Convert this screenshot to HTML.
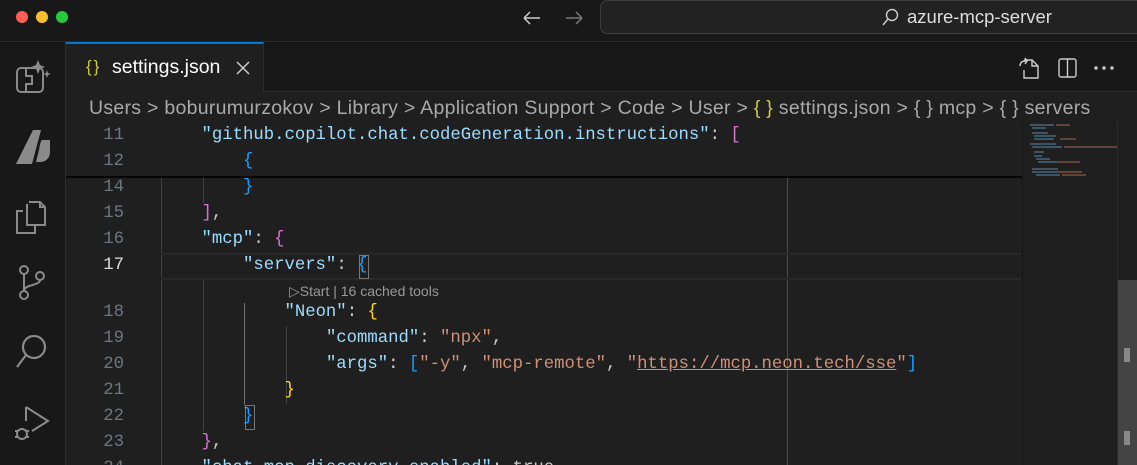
<!DOCTYPE html>
<html><head><meta charset="utf-8"><style>
*{margin:0;padding:0;box-sizing:border-box}
html,body{width:1137px;height:465px;overflow:hidden}
body{background:#1f1f1f;font-family:"Liberation Sans",sans-serif;position:relative}
.abs{position:absolute}
.mono{font-family:"Liberation Mono",monospace;font-size:17.3px;white-space:pre}
.ln{position:absolute;left:66px;width:58px;text-align:right;color:#6e7681}
.code{position:absolute;left:160px;color:#ccc}
.k{color:#9cdcfe}.s{color:#ce9178}.p{color:#da70d6}.b{color:#179fff}.y{color:#ffd700}
.g{position:absolute;width:1px;background:#404040}
</style></head><body>
<div class="abs" style="left:0;top:0;width:1137px;height:42px;background:#181818;border-bottom:1px solid #2b2b2b"></div>
<div class="abs" style="left:16px;top:11px;width:12px;height:12px;border-radius:50%;background:#ff5f57"></div>
<div class="abs" style="left:36px;top:11px;width:12px;height:12px;border-radius:50%;background:#febc2e"></div>
<div class="abs" style="left:56px;top:11px;width:12px;height:12px;border-radius:50%;background:#28c840"></div>
<svg class="abs" style="left:520px;top:8px" width="70" height="20"><path d="M4 10h16M4 10l6-6M4 10l6 6" stroke="#ccc" stroke-width="1.5" fill="none"/><path d="M46 10h16M62 10l-6-6M62 10l-6 6" stroke="#777" stroke-width="1.5" fill="none"/></svg>
<div class="abs" style="left:600px;top:0;width:560px;height:34px;border:1px solid #3c3c3c;border-radius:7px;background:#222"></div>
<svg class="abs" style="left:880px;top:7px" width="20" height="20"><circle cx="12" cy="8" r="5.5" stroke="#ccc" stroke-width="1.4" fill="none"/><path d="M8 12L3 18" stroke="#ccc" stroke-width="1.4"/></svg>
<div class="abs" style="left:907px;top:6px;color:#ddd;font-size:18.5px">azure-mcp-server</div>
<div class="abs" style="left:0;top:42px;width:66px;height:423px;background:#181818;border-right:1px solid #2b2b2b"></div>
<svg class="abs" style="left:14px;top:58px" width="40" height="40" fill="none" stroke="#8a8a8a" stroke-width="2"><rect x="3" y="10" width="26" height="24" rx="4"/><path d="M12 10v8h6v8h-6v8"/><path d="M24 2l2 5 5 2-5 2-2 5-2-5-5-2 5-2z" fill="#8a8a8a" stroke="none"/><path d="M33 12l1 3 3 1-3 1-1 3-1-3-3-1 3-1z" fill="#8a8a8a" stroke="none"/></svg>
<svg class="abs" style="left:14px;top:126px" width="40" height="40"><path d="M19 4h8l-9 34H2z" fill="#8a8a8a"/><path d="M28 14h8v12c0 6-4 10-10 10h-4l3-12c1-6 2-10 3-10z" fill="#8a8a8a"/></svg>
<svg class="abs" style="left:14px;top:195px" width="40" height="40" fill="none" stroke="#8a8a8a" stroke-width="2"><path d="M13 9V30h18V12l-5-5H15"/><path d="M26 7v5h5"/><path d="M9 16H3v22h18v-8"/></svg>
<svg class="abs" style="left:14px;top:264px" width="40" height="40" fill="none" stroke="#8a8a8a" stroke-width="2"><circle cx="10" cy="6" r="4"/><circle cx="10" cy="31" r="4"/><circle cx="26" cy="12" r="4"/><path d="M10 10v17M26 16c0 6-16 4-16 11"/></svg>
<svg class="abs" style="left:14px;top:333px" width="40" height="40" fill="none" stroke="#8a8a8a" stroke-width="2.2"><circle cx="20" cy="14" r="11"/><path d="M12 22L3 34"/></svg>
<svg class="abs" style="left:14px;top:403px" width="40" height="40" fill="none" stroke="#8a8a8a" stroke-width="2"><path d="M12 4v14M12 4l22 14-16 10"/><circle cx="8" cy="31" r="5"/><path d="M1 28h3M12 28h3M1 34h3M12 34h3"/></svg>
<div class="abs" style="left:66px;top:42px;width:1071px;height:50px;background:#181818;border-bottom:1px solid #2b2b2b"></div>
<div class="abs" style="left:66px;top:42px;width:198px;height:51px;background:#1f1f1f;border-top:2px solid #0078d4;border-right:1px solid #2b2b2b"></div>
<div class="abs" style="left:86px;top:57px;color:#cbcb41;font-size:17px;letter-spacing:2px;white-space:pre">{}</div>
<div class="abs" style="left:112px;top:56px;color:#fff;font-size:19.5px">settings.json</div>
<svg class="abs" style="left:236px;top:61px" width="14" height="14"><path d="M1 1l12 12M13 1L1 13" stroke="#ccc" stroke-width="1.5"/></svg>
<svg class="abs" style="left:1018px;top:56px" width="110" height="24" fill="none" stroke="#ccc" stroke-width="1.4"><path d="M6 4h8l6 6v12H6v-8"/><path d="M14 4v6h6"/><path d="M2 10c0-3 2-5 5-5h2M7 2l2 3-2 3"/><rect x="41" y="3" width="17" height="18" rx="2"/><path d="M49.5 3v18"/><circle cx="78" cy="12" r="1" fill="#ccc"/><circle cx="86" cy="12" r="1" fill="#ccc"/><circle cx="94" cy="12" r="1" fill="#ccc"/></svg>
<div class="abs" style="left:89px;top:97px;color:#a9a9a9;font-size:19.5px;letter-spacing:0.28px;white-space:pre">Users &gt; boburumurzokov &gt; Library &gt; Application Support &gt; Code &gt; User &gt; <span style="color:#cbcb41">{ }</span> settings.json &gt; { } mcp &gt; { } servers</div>
<div class="g" style="left:161px;top:177px;height:291px;"></div>
<div class="g" style="left:203px;top:177px;height:26px;"></div>
<div class="g" style="left:203px;top:278px;height:153px;"></div>
<div class="g" style="left:244px;top:303px;height:102px;background:#707070"></div>
<div class="g" style="left:286px;top:326px;height:78px;"></div>
<div class="abs" style="left:787px;top:177px;width:1px;height:288px;background:#4a4a4a"></div>
<div class="abs" style="left:161px;top:253px;width:860px;height:27px;border-top:2px solid #282828;border-bottom:2px solid #282828"></div>
<div class="abs" style="left:359px;top:255px;width:10px;height:24px;border:1px solid #777"></div>
<div class="abs" style="left:245px;top:405px;width:10px;height:25px;border:1px solid #777"></div>
<div class="mono">
<div class="ln" style="top:126px">11</div><div class="code" style="top:126px">    <span class="k">"github.copilot.chat.codeGeneration.instructions"</span>: <span class="p">[</span></div>
<div class="ln" style="top:152px">12</div><div class="code" style="top:152px">        <span class="b">{</span></div>
<div class="ln" style="top:178px">14</div><div class="code" style="top:178px">        <span class="b">}</span></div>
<div class="ln" style="top:204px">15</div><div class="code" style="top:204px">    <span class="p">]</span>,</div>
<div class="ln" style="top:230px">16</div><div class="code" style="top:230px">    <span class="k">"mcp"</span>: <span class="p">{</span></div>
<div class="ln" style="top:256px;color:#ddd">17</div><div class="code" style="top:256px">        <span class="k">"servers"</span>: <span class="b">{</span></div>
<div class="abs" style="left:289px;top:283px;font-family:'Liberation Sans',sans-serif;font-size:14px;color:#999">▷Start | 16 cached tools</div>
<div class="ln" style="top:303px">18</div><div class="code" style="top:303px">            <span class="k">"Neon"</span>: <span class="y">{</span></div>
<div class="ln" style="top:329px">19</div><div class="code" style="top:329px">                <span class="k">"command"</span>: <span class="s">"npx"</span>,</div>
<div class="ln" style="top:355px">20</div><div class="code" style="top:355px">                <span class="k">"args"</span>: <span class="b">[</span><span class="s">"-y"</span>, <span class="s">"mcp-remote"</span>, <span class="s">"<u>https://mcp.neon.tech/sse</u>"</span><span class="b">]</span></div>
<div class="ln" style="top:381px">21</div><div class="code" style="top:381px">            <span class="y">}</span></div>
<div class="ln" style="top:407px">22</div><div class="code" style="top:407px">        <span class="b">}</span></div>
<div class="ln" style="top:433px">23</div><div class="code" style="top:433px">    <span class="p">}</span>,</div>
<div class="ln" style="top:459px">24</div><div class="code" style="top:459px">    <span class="k">"chat.mcp.discovery.enabled"</span>: true</div>
</div>
<div class="abs" style="left:66px;top:176px;width:956px;height:2px;background:#050505"></div>
<div class="abs" style="left:1022px;top:122px;width:1px;height:343px;background:#151515"></div>
<svg class="abs" style="left:1028px;top:124px" width="90" height="60"><g stroke="#5b8aa8" stroke-width="1"><path d="M2 1h24M4 4h14M4 9h16M6 12h22M6 15h20M2 20h26M4 23h30M6 28h10M6 32h8M8 35h14M10 38h20M4 45h26M4 48h26M8 51h24"/></g><g stroke="#a06a50" stroke-width="1"><path d="M28 1h14M32 15h16M36 23h54M30 38h22M30 48h24M34 51h24"/></g></svg>
<div class="abs" style="left:1117px;top:122px;width:20px;height:343px;background:#1f1f1f;border-left:1px solid #2b2b2b"></div>
<div class="abs" style="left:1118px;top:280px;width:19px;height:185px;background:#444"></div>
<div class="abs" style="left:1124px;top:348px;width:6px;height:14px;background:#888"></div>
<div class="abs" style="left:1124px;top:431px;width:6px;height:14px;background:#888"></div>
</body></html>
